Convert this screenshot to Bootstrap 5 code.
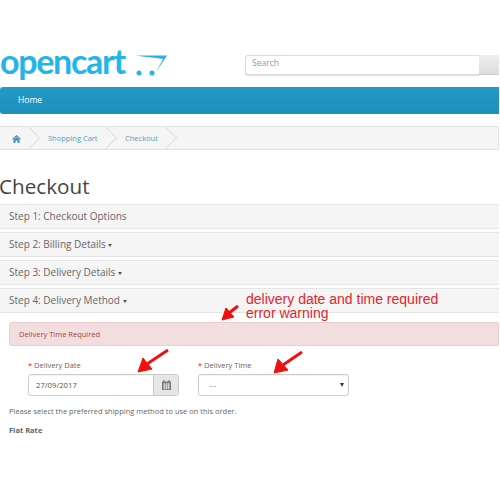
<!DOCTYPE html>
<html lang="en">
<head>
    <meta charset="UTF-8">
    <meta name="viewport" content="width=device-width, initial-scale=1.0">
    <title>Checkout</title>
    <link rel="stylesheet" href="https://cdn.jsdelivr.net/npm/bootstrap@5.3.0/dist/css/bootstrap.min.css">
    <style>
        html, body { height: 500px; overflow: hidden; }
        body { font-family: "Open Sans", sans-serif; font-size: 8px; color: #666; position: relative; background: #fff; padding-right: 1px; }
        .shop-head { height: 87px; padding-top: 48px; }
        .shop-logo { font-family: "Lato", sans-serif; font-weight: 700; font-size: 34px; line-height: 34px; color: #25b4ea; letter-spacing: -1.3px; margin-top: -4px; height: 34px; }
        .shop-cart { width: 34px; height: 24px; margin-left: 9px; margin-top: 6px; }
        .shop-search { width: 254px; height: 20px; margin-top: 7px; }
        .shop-search input { flex: 1; height: 20px; border: 1px solid #ddd; border-right: 0; border-radius: 3px 0 0 3px; padding: 0 6px 5px; font-size: 8.5px; box-shadow: 0 1px 1px #ddd; }
        .shop-search input::placeholder { color: #999; }
        .shop-search span { width: 20px; background: linear-gradient(#eee, #ddd); border-bottom: 1px solid #ccc; }
        .shop-nav { height: 27px; background: linear-gradient(#229ac8, #1f90bb); border-bottom: 1px solid #1f90bb; border-radius: 3px 0 0 3px; padding-left: 18px; line-height: 26px; color: #fff; font-size: 8.5px; }
        .shop-crumbs { height: 24px; margin-top: 12px; background: #f5f5f5; border: 1px solid #e3e3e3; border-width: 1px 1px 1px 0; color: #5a9bc4; line-height: 22px; font-size: 7.5px; white-space: nowrap; }
        .shop-crumbs > div { position: relative; flex: none; padding-left: 12px; }
        .shop-crumbs > div:nth-child(1) { width: 36px; }
        .shop-crumbs > div:nth-child(2) { width: 77px; }
        .shop-crumbs > div:nth-child(3) { width: 60px; }
        .shop-crumbs > div::after { content: ""; position: absolute; right: -1px; top: 3px; width: 16px; height: 16px; border: 1px solid #e0e0e0; border-width: 1px 1px 0 0; transform: rotate(45deg); }
        .shop-title { font-size: 20.7px; font-weight: 400; line-height: 29px; margin: 22px 0 0 -1px; color: #444; height: 29px; }
        .step-bar { height: 25px; margin-top: 3px; background: #f5f5f5; border-top: 1px solid #e5e5e5; border-bottom: 1px solid #e5e5e5; padding-left: 9px; line-height: 23px; font-size: 10px; color: #666; }
        .step-caret { display: inline-block; border-top: 3px solid #555; border-left: 2.5px solid transparent; border-right: 2.5px solid transparent; vertical-align: middle; }
        .warn-box { height: 24px; margin: 9px 0 0 9px; background: #f2dede; border: 1px solid #ebccd1; border-radius: 3px 0 0 3px; padding-left: 9px; line-height: 22px; color: #a94442; font-size: 7.5px; }
        .time-row { margin: 13px 0 0 28px; gap: 19px; }
        .time-field { width: 151px; }
        .time-field label { display: block; font-size: 7.5px; line-height: 12px; height: 15px; color: #666; }
        .time-field label b { color: #f00; font-weight: 400; }
        .time-box { height: 22px; border: 1px solid #ccc; border-radius: 3px; font-size: 7.7px; line-height: 20px; padding-left: 7px; color: #555; box-shadow: inset 0 1px 1px rgba(0,0,0,.05); position: relative; }
        .time-pick { padding-left: 10px; color: #888; }
        .cal-add { position: absolute; right: 0; top: 0; width: 25px; height: 20px; background: #e6e6e6; border-left: 1px solid #ccc; border-radius: 0 2px 2px 0; }
        .sel-caret { position: absolute; right: 4px; top: 8px; border-top: 4px solid #333; border-left: 2.5px solid transparent; border-right: 2.5px solid transparent; }
        .ship-note { margin: 9px 0 0 9px; line-height: 12px; font-size: 7.5px; }
        .ship-name { margin: 7px 0 0 9px; line-height: 12px; font-size: 7.5px; font-weight: 700; }
        .mark-text { position: absolute; left: 246px; top: 292px; color: #e8232a; font-family: "Liberation Sans", sans-serif; font-size: 14px; line-height: 14px; }
        .mark-arrow { position: absolute; left: 0; top: 0; width: 500px; height: 500px; pointer-events: none; }
    </style>
</head>
<body>
<div class="shop-head d-flex justify-content-between">
    <div class="d-flex">
        <div class="shop-logo">opencart</div>
        <svg class="shop-cart" viewBox="0 0 34 24">
            <path d="M2 1.5 L33 1.5 L22 18 L29 5 C20 3.5 10 3 2 1.5 Z" fill="#25b4ea"/>
            <circle cx="5" cy="19" r="2.5" fill="#25b4ea"/>
            <circle cx="18" cy="19" r="2.5" fill="#25b4ea"/>
        </svg>
    </div>
    <div class="shop-search d-flex">
        <input type="text" placeholder="Search">
        <span></span>
    </div>
</div>
<div class="shop-nav">Home</div>
<div class="shop-crumbs d-flex">
    <div>
        <svg width="9" height="8" viewBox="0 0 18 16"><path d="M9 0 L18 8 L16 9 L9 3 L2 9 L0 8 Z M3 9 L9 4 L15 9 V16 H11 V11 H7 V16 H3 Z" fill="#3f8fc0"/></svg>
    </div>
    <div>Shopping Cart</div>
    <div>Checkout</div>
</div>
<h1 class="shop-title">Checkout</h1>
<div class="step-bar">Step 1: Checkout Options</div>
<div class="step-bar">Step 2: Billing Details <span class="step-caret"></span></div>
<div class="step-bar">Step 3: Delivery Details <span class="step-caret"></span></div>
<div class="step-bar">Step 4: Delivery Method <span class="step-caret"></span></div>
<div class="warn-box">Delivery Time Required</div>
<div class="time-row d-flex">
    <div class="time-field">
        <label><b>*</b> Delivery Date</label>
        <div class="time-box">27/09/2017
            <span class="cal-add d-flex align-items-center justify-content-center">
                <svg width="9" height="10" viewBox="0 0 9 10"><path d="M0 1.5 H9 V10 H0 Z" fill="#777"/><path d="M1 4 H8 M1 6 H8 M1 8 H8 M2.5 3.5 V9.5 M4.5 3.5 V9.5 M6.5 3.5 V9.5" stroke="#eee" stroke-width=".7"/><path d="M2 0 V2 M7 0 V2" stroke="#777" stroke-width="1.2"/></svg>
            </span>
        </div>
    </div>
    <div class="time-field">
        <label><b>*</b> Delivery Time</label>
        <div class="time-box time-pick">---<span class="sel-caret"></span></div>
    </div>
</div>
<div class="ship-note">Please select the preferred shipping method to use on this order.</div>
<div class="ship-name">Flat Rate</div>

<div class="mark-text">delivery date and time required<br>error warning</div>
<svg class="mark-arrow" viewBox="0 0 500 500">
    <g fill="#f01010" stroke="#f01010">
        <path d="M238 306 L229 313" stroke-width="3"/>
        <path d="M222 320 L226 308 L234 317 Z"/>
        <path d="M168 350 L147 364" stroke-width="3"/>
        <path d="M138 372 L143 358 L152 369 Z"/>
        <path d="M302 352 L283 365" stroke-width="3"/>
        <path d="M274 373 L278 359 L288 370 Z"/>
    </g>
</svg>
</body>
</html>
